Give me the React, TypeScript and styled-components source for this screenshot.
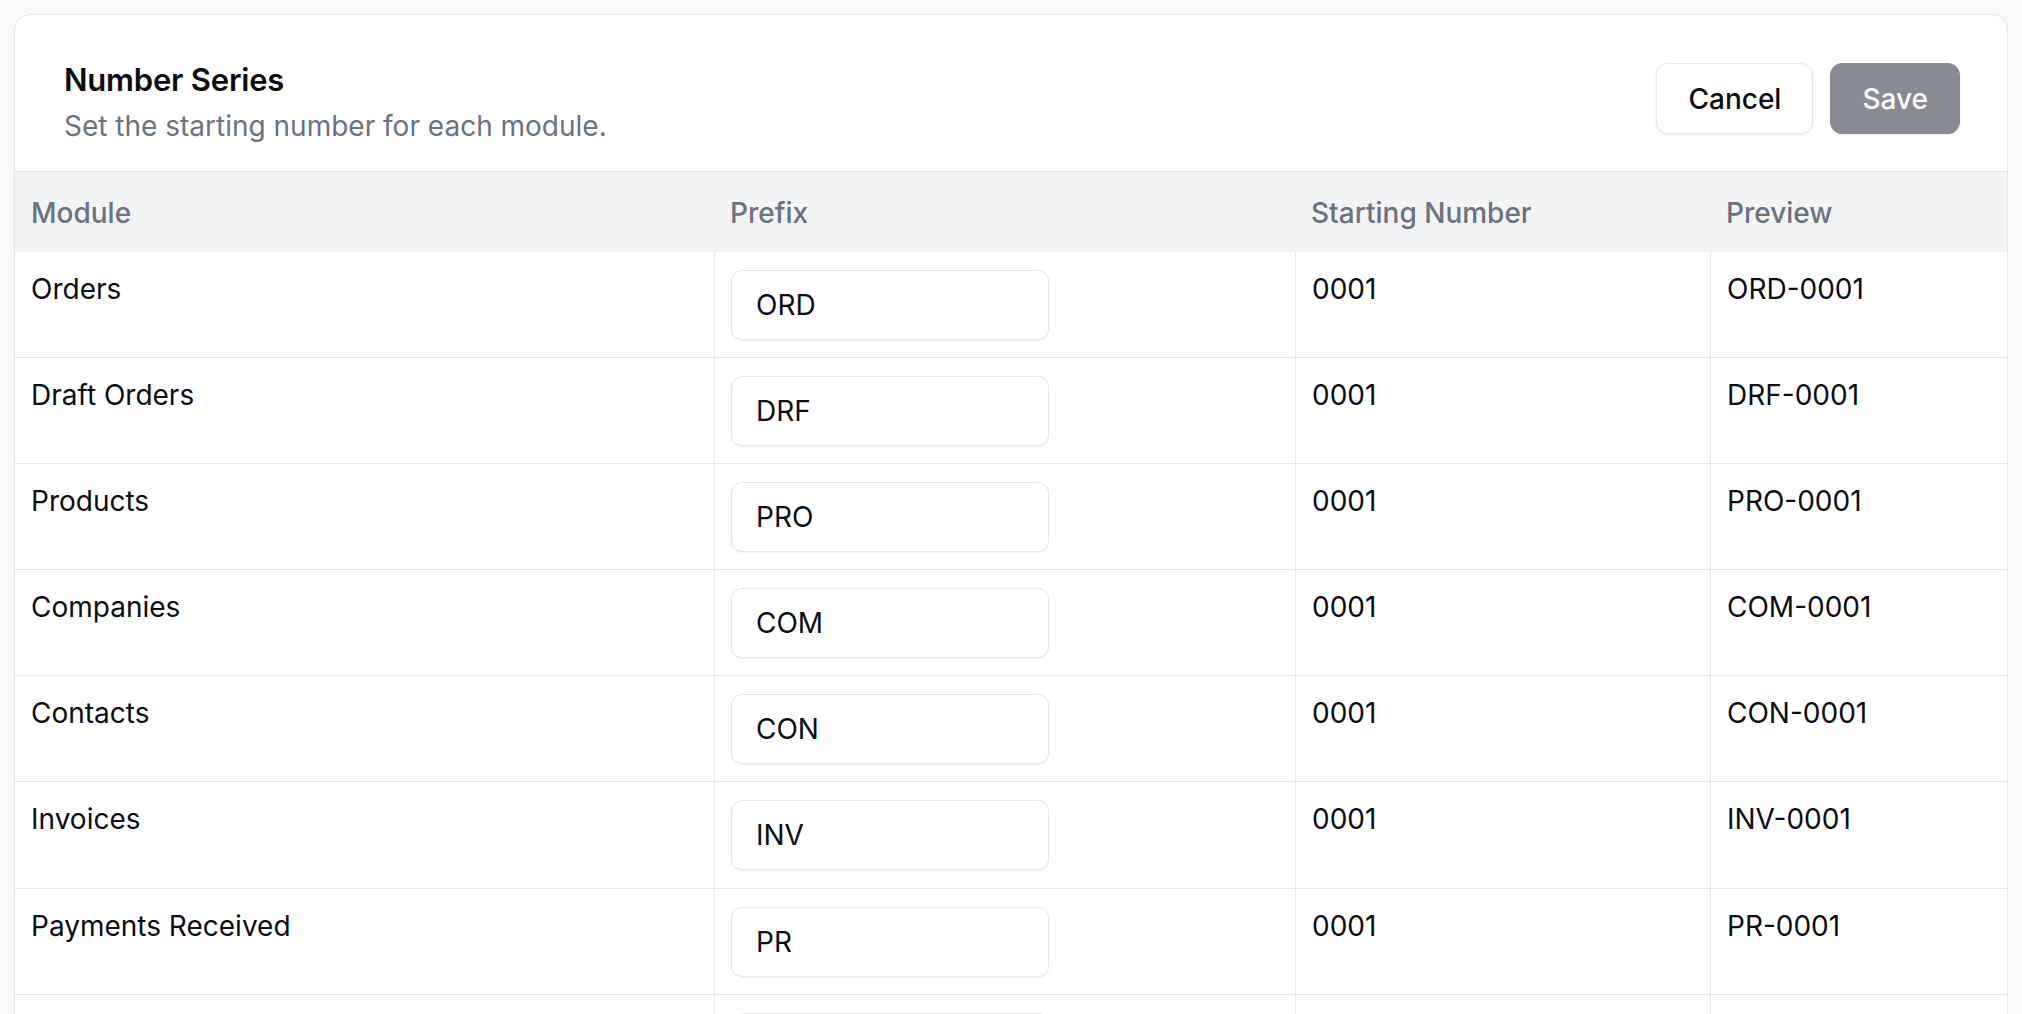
import React from "react";
import styled, { createGlobalStyle } from "styled-components";

const GlobalStyle = createGlobalStyle`
  html, body {
    margin: 0;
    padding: 0;
    background: #f9fafb;
    overflow: hidden;
  }
  body {
    font-family: Inter, "Noto Sans", "Liberation Sans", sans-serif;
    color: #111827;
  }
  * { box-sizing: border-box; }
`;

const Page = styled.div`
  padding: 14px;
`;

const Card = styled.section`
  background: #ffffff;
  border: 1px solid #e5e7eb;
  border-radius: 16px;
  box-shadow: 0 1px 2px rgba(16, 24, 40, 0.04);
  overflow: hidden;
`;

const CardHeader = styled.header`
  display: flex;
  justify-content: space-between;
  align-items: flex-start;
  padding: 49px 47px 25px 49px;
  border-bottom: 1px solid #e5e7eb;
`;

const TitleBlock = styled.div`
  display: flex;
  flex-direction: column;
  gap: 11px;
`;

const Title = styled.h2`
  margin: 0;
  font-size: 31px;
  line-height: 31px;
  font-weight: 600;
  letter-spacing: -0.2px;
  color: #0b0d12;
`;

const Subtitle = styled.p`
  margin: 0;
  font-size: 28px;
  line-height: 40px;
  color: #6b7280;
`;

const Actions = styled.div`
  display: flex;
  gap: 17px;
  margin-top: -1px;
`;

const Button = styled.button<{ $variant: "outline" | "primary" }>`
  height: 71px;
  padding: 0 31px;
  border-radius: 12px;
  font-family: inherit;
  font-size: 28px;
  font-weight: 500;
  line-height: 1;
  cursor: pointer;
  border: 1px solid ${(p) => (p.$variant === "outline" ? "#e5e7eb" : "#888b93")};
  background: ${(p) => (p.$variant === "outline" ? "#ffffff" : "#888b93")};
  color: ${(p) => (p.$variant === "outline" ? "#0b0d12" : "#ffffff")};
  box-shadow: 0 1px 3px rgba(16, 24, 40, 0.08);
`;

const Row = styled.div<{ $head?: boolean }>`
  display: grid;
  grid-template-columns: 699px 581px 415px 1fr;
  background: ${(p) => (p.$head ? "#f3f4f6" : "#ffffff")};
  border-bottom: ${(p) => (p.$head ? "none" : "1px solid #e5e7eb")};
`;

const HeadCell = styled.div`
  height: 80px;
  display: flex;
  align-items: center;
  padding: 2px 0 0 16px;
  font-size: 28px;
  font-weight: 500;
  color: #6b7280;
`;

const Cell = styled.div<{ $divider?: boolean }>`
  padding: 18px 16px 17.1px 16px;
  border-left: ${(p) => (p.$divider ? "1px solid #e5e7eb" : "none")};
  font-size: 28px;
  line-height: 38px;
  color: #0b0d12;
`;

const PrefixInput = styled.input`
  display: block;
  width: 318px;
  height: 70px;
  padding: 0 24px;
  border: 1px solid #e5e7eb;
  border-radius: 11px;
  background: #ffffff;
  box-shadow: 0 1px 2px rgba(16, 24, 40, 0.06);
  font-family: inherit;
  font-size: 28px;
  color: #0b0d12;
  outline: none;
`;

const modules = [
  { name: "Orders", prefix: "ORD" },
  { name: "Draft Orders", prefix: "DRF" },
  { name: "Products", prefix: "PRO" },
  { name: "Companies", prefix: "COM" },
  { name: "Contacts", prefix: "CON" },
  { name: "Invoices", prefix: "INV" },
  { name: "Payments Received", prefix: "PR" },
  { name: "Quotes", prefix: "QUO" },
];

export default function App() {
  return (
    <>
      <GlobalStyle />
      <Page>
        <Card>
          <CardHeader>
            <TitleBlock>
              <Title>Number Series</Title>
              <Subtitle>Set the starting number for each module.</Subtitle>
            </TitleBlock>
            <Actions>
              <Button $variant="outline">Cancel</Button>
              <Button $variant="primary" disabled>
                Save
              </Button>
            </Actions>
          </CardHeader>
          <Row $head>
            <HeadCell>Module</HeadCell>
            <HeadCell>Prefix</HeadCell>
            <HeadCell>Starting Number</HeadCell>
            <HeadCell>Preview</HeadCell>
          </Row>
          {modules.map((m) => (
            <Row key={m.name}>
              <Cell>{m.name}</Cell>
              <Cell $divider>
                <PrefixInput defaultValue={m.prefix} />
              </Cell>
              <Cell $divider>0001</Cell>
              <Cell $divider>{`${m.prefix}-0001`}</Cell>
            </Row>
          ))}
        </Card>
      </Page>
    </>
  );
}
